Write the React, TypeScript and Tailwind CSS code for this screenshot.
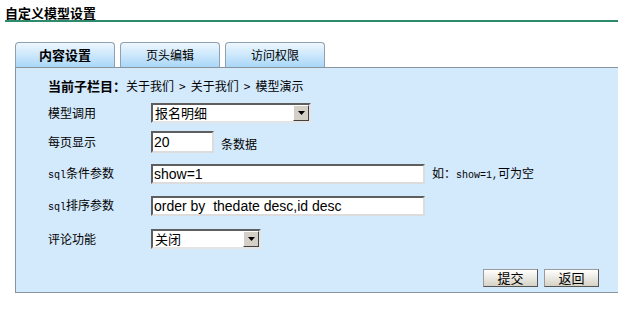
import React from "react";

const cjk = { fontFamily: '"Noto Sans CJK SC", "Liberation Sans", sans-serif' };
const arial = { fontFamily: '"Liberation Sans", "Noto Sans CJK SC", sans-serif' };
const mono = { fontFamily: '"Liberation Mono", monospace' };

function Arrow() {
  return (
    <div className="w-[16px] h-[16px] bg-[#d4d0c8] border border-t-white border-l-white border-r-[#404040] border-b-[#404040] flex items-center justify-center">
      <svg width="7" height="4" viewBox="0 0 7 4">
        <path d="M0 0 H7 L3.5 4 Z" fill="#000" />
      </svg>
    </div>
  );
}

function Select({ w, text }: { w: string; text: string }) {
  return (
    <div
      className={`${w} h-[20px] bg-white border-2 border-t-[#5e5e5e] border-l-[#5e5e5e] border-r-[#e4e4e4] border-b-[#e4e4e4] flex items-center justify-between pl-[2px]`}
    >
      <span className="text-[13px] leading-[16px] text-black" style={cjk}>
        {text}
      </span>
      <Arrow />
    </div>
  );
}

function Input({ w, text }: { w: string; text: string }) {
  return (
    <div
      className={`${w} h-full bg-white border-2 border-t-[#5e5e5e] border-l-[#5e5e5e] border-r-[#dcdcdc] border-b-[#dcdcdc] flex items-center pl-[1px]`}
    >
      <span className="text-[14px] leading-[16px] text-black whitespace-pre" style={arial}>
        {text}
      </span>
    </div>
  );
}

function Label({ children }: { children: React.ReactNode }) {
  return (
    <div className="w-[103px] shrink-0 text-[12px] leading-[16px] text-black" style={cjk}>
      {children}
    </div>
  );
}

function Btn({ text }: { text: string }) {
  return (
    <div
      className="w-[55px] h-[18px] border border-t-[#9a9a9a] border-l-[#9a9a9a] border-r-[#555] border-b-[#555] bg-gradient-to-b from-[#ffffff] to-[#d6d2c6] flex items-center justify-center text-[13px] leading-[16px] text-black"
      style={cjk}
    >
      {text}
    </div>
  );
}

function Tab({ text, active }: { text: string; active?: boolean }) {
  return (
    <div
      className={`w-[100px] h-[25px] rounded-t-[4px] border border-b-0 border-[#8fa0b0] bg-gradient-to-b from-[#eef7fe] to-[#a9d7f8] flex items-center justify-center text-[12px] leading-[16px] text-black ${
        active ? "font-bold text-[13px]" : ""
      }`}
      style={cjk}
    >
      {text}
    </div>
  );
}

export default function App() {
  return (
    <div className="w-[618px] h-[319px] bg-white overflow-hidden" style={cjk}>
      <div className="ml-[5px] pt-[5px] h-[22px] border-b-2 border-[#2e8a6c]">
        <div className="text-[13px] leading-[15px] font-bold text-black" style={cjk}>
          自定义模型设置
        </div>
      </div>

      <div className="ml-[15px] mt-[20px] flex gap-[5px]">
        <Tab text="内容设置" active />
        <Tab text="页头编辑" />
        <Tab text="访问权限" />
      </div>

      <div className="ml-[15px] w-[620px] border-t border-l border-b border-[#8a949c] bg-[#d3e9fc] pl-[32px] pt-[8px] pb-[5px]">
        <div className="h-[20px] flex items-center text-[12px] leading-[16px] text-black" style={cjk}>
          <span className="font-bold text-[13px]">当前子栏目：</span>
          <span>关于我们</span>
          <span className="mx-[5px]">&gt;</span>
          <span>关于我们</span>
          <span className="mx-[5px]">&gt;</span>
          <span>模型演示</span>
        </div>

        <div className="mt-[7px] h-[20px] flex items-center">
          <Label>模型调用</Label>
          <Select w="w-[160px]" text="报名明细" />
        </div>

        <div className="mt-[8px] h-[22px] flex items-center">
          <Label>每页显示</Label>
          <Input w="w-[63px]" text="20" />
          <span className="ml-[7px] self-end mb-[1px] text-[12px] leading-[16px] text-black" style={cjk}>
            条数据
          </span>
        </div>

        <div className="mt-[11px] h-[20px] flex items-center">
          <Label>
            <span className="text-[10px]" style={mono}>sql</span>条件参数
          </Label>
          <Input w="w-[274px]" text="show=1" />
          <span className="ml-[7px] text-[12px] leading-[16px] text-black" style={cjk}>
            如：<span className="text-[10px]" style={mono}>show=1,</span>可为空
          </span>
        </div>

        <div className="mt-[12px] h-[20px] flex items-center">
          <Label>
            <span className="text-[10px]" style={mono}>sql</span>排序参数
          </Label>
          <Input w="w-[274px]" text="order by  thedate desc,id desc" />
        </div>

        <div className="mt-[12px] h-[21px] flex items-center">
          <Label>评论功能</Label>
          <Select w="w-[110px]" text="关闭" />
        </div>

        <div className="mt-[20px] w-[571px] flex justify-end gap-[6px] pr-[20px]">
          <Btn text="提交" />
          <Btn text="返回" />
        </div>
      </div>
    </div>
  );
}
